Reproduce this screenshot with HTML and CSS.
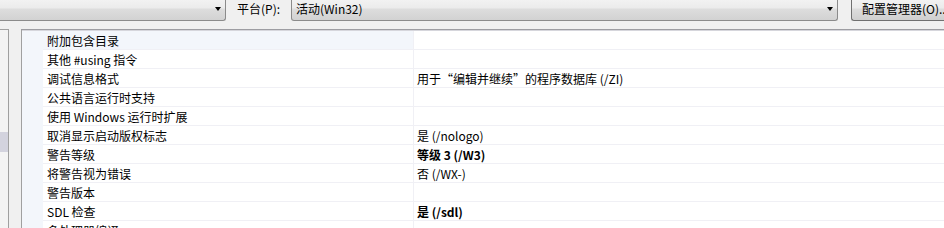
FILE: index.html
```html
<!DOCTYPE html>
<html lang="zh-CN">
<head>
    <meta charset="UTF-8">
    <title>属性页</title>
    <link rel="stylesheet" href="styles.css">
</head>
<body>

    <!-- Toolbar: configuration / platform -->
    <div class="toolbar">
        <div class="combo combo-config">
            <span class="combo-text"></span>
            <span class="arrow"></span>
        </div>
        <label class="tool-label">平台(P):</label>
        <div class="combo combo-platform">
            <span class="combo-text">活动(Win32)</span>
            <span class="arrow"></span>
        </div>
        <button class="tool-btn">配置管理器(O)...</button>
    </div>

    <!-- Main area -->
    <div class="main">
        <div class="tree-pane">
            <div class="tree-item selected"></div>
        </div>
        <div class="splitter"></div>

        <!-- Property grid -->
        <div class="grid">
            <div class="gutter"></div>
            <div class="rows">
                <div class="row first">
                    <div class="name">附加包含目录</div>
                    <div class="value"></div>
                </div>
                <div class="row">
                    <div class="name">其他 #using 指令</div>
                    <div class="value"></div>
                </div>
                <div class="row">
                    <div class="name">调试信息格式</div>
                    <div class="value">用于“编辑并继续”的程序数据库 (/ZI)</div>
                </div>
                <div class="row">
                    <div class="name">公共语言运行时支持</div>
                    <div class="value"></div>
                </div>
                <div class="row">
                    <div class="name">使用 Windows 运行时扩展</div>
                    <div class="value"></div>
                </div>
                <div class="row">
                    <div class="name">取消显示启动版权标志</div>
                    <div class="value">是 (/nologo)</div>
                </div>
                <div class="row">
                    <div class="name">警告等级</div>
                    <div class="value bold">等级 3 (/W3)</div>
                </div>
                <div class="row">
                    <div class="name">将警告视为错误</div>
                    <div class="value">否 (/WX-)</div>
                </div>
                <div class="row">
                    <div class="name">警告版本</div>
                    <div class="value"></div>
                </div>
                <div class="row">
                    <div class="name">SDL 检查</div>
                    <div class="value bold">是 (/sdl)</div>
                </div>
                <div class="row">
                    <div class="name">多处理器编译</div>
                    <div class="value"></div>
                </div>
            </div>
        </div>
    </div>

</body>
</html>
```

FILE: styles.css
```css
/* Base */
* {
    margin: 0;
    padding: 0;
    box-sizing: border-box;
}

body {
    width: 944px;
    height: 228px;
    overflow: hidden;
    background-color: #f0f0f0;
    font-family: "Noto Sans CJK SC", "Microsoft YaHei", sans-serif;
    font-size: 12px;
    color: #000;
}

/* Toolbar */
.toolbar {
    display: flex;
    height: 21px;
}

.combo {
    display: flex;
    align-items: flex-start;
    justify-content: space-between;
    height: 21px;
    border: 1px solid #8b8b8b;
    border-top: none;
    background: linear-gradient(to bottom, #f2f2f2 0%, #ebebeb 40%, #dddddd 45%, #d2d2d2 100%);
}

.combo-config {
    width: 226px;
    border-left: none;
    border-radius: 0 0 3px 0;
}

.combo-platform {
    width: 547px;
    border-radius: 0 0 3px 3px;
}

.combo-text {
    padding-left: 4px;
    line-height: 18px;
}

.arrow {
    width: 0;
    height: 0;
    margin: 7px 4px 0 0;
    border-left: 3.5px solid transparent;
    border-right: 3.5px solid transparent;
    border-top: 4px solid #000;
}

.tool-label {
    width: 65px;
    padding-left: 11px;
    line-height: 18px;
    color: #000;
}

.tool-btn {
    margin-left: 13px;
    flex: 1;
    height: 21px;
    padding-left: 10px;
    text-align: left;
    white-space: nowrap;
    overflow: hidden;
    font-family: inherit;
    font-size: 12px;
    line-height: 18px;
    display: flex;
    align-items: flex-start;
    border: 1px solid #707070;
    border-top: none;
    border-right: none;
    border-radius: 0 0 0 3px;
    background: linear-gradient(to bottom, #f2f2f2 0%, #ebebeb 40%, #dddddd 45%, #cfcfcf 100%);
    color: #000;
}

/* Main area */
.main {
    display: flex;
    margin-top: 8px;
    height: 199px;
}

.tree-pane {
    width: 9px;
    border-top: 1px solid #a0a0a0;
    border-right: 1px solid #a0a0a0;
    background-color: #f4f4f4;
    padding-top: 102px;
}

.tree-item.selected {
    height: 20px;
    background-color: #d3d3de;
}

.splitter {
    width: 12px;
}

/* Property grid */
.grid {
    flex: 1;
    display: flex;
    overflow: hidden;
    border-top: 1px solid #9d9da2;
    border-left: 1px solid #a0a0a0;
    box-shadow: inset 0 1px 0 #d6d6dc;
    padding-top: 1px;
    background-color: #fff;
}

.gutter {
    width: 21px;
    background-color: #f3f6fb;
}

.rows {
    flex: 1;
}

.row {
    display: flex;
    height: 19px;
    border-bottom: 1px solid #f0f0f5;
}

.name {
    width: 371px;
    padding-left: 4px;
    line-height: 20px;
    border-right: 1px solid #f0f0f5;
    white-space: nowrap;
}

.row.first .name {
    background-color: #f3f6fb;
}

.value {
    flex: 1;
    padding-left: 3px;
    line-height: 20px;
    white-space: nowrap;
}

.value.bold {
    font-weight: bold;
}
```
